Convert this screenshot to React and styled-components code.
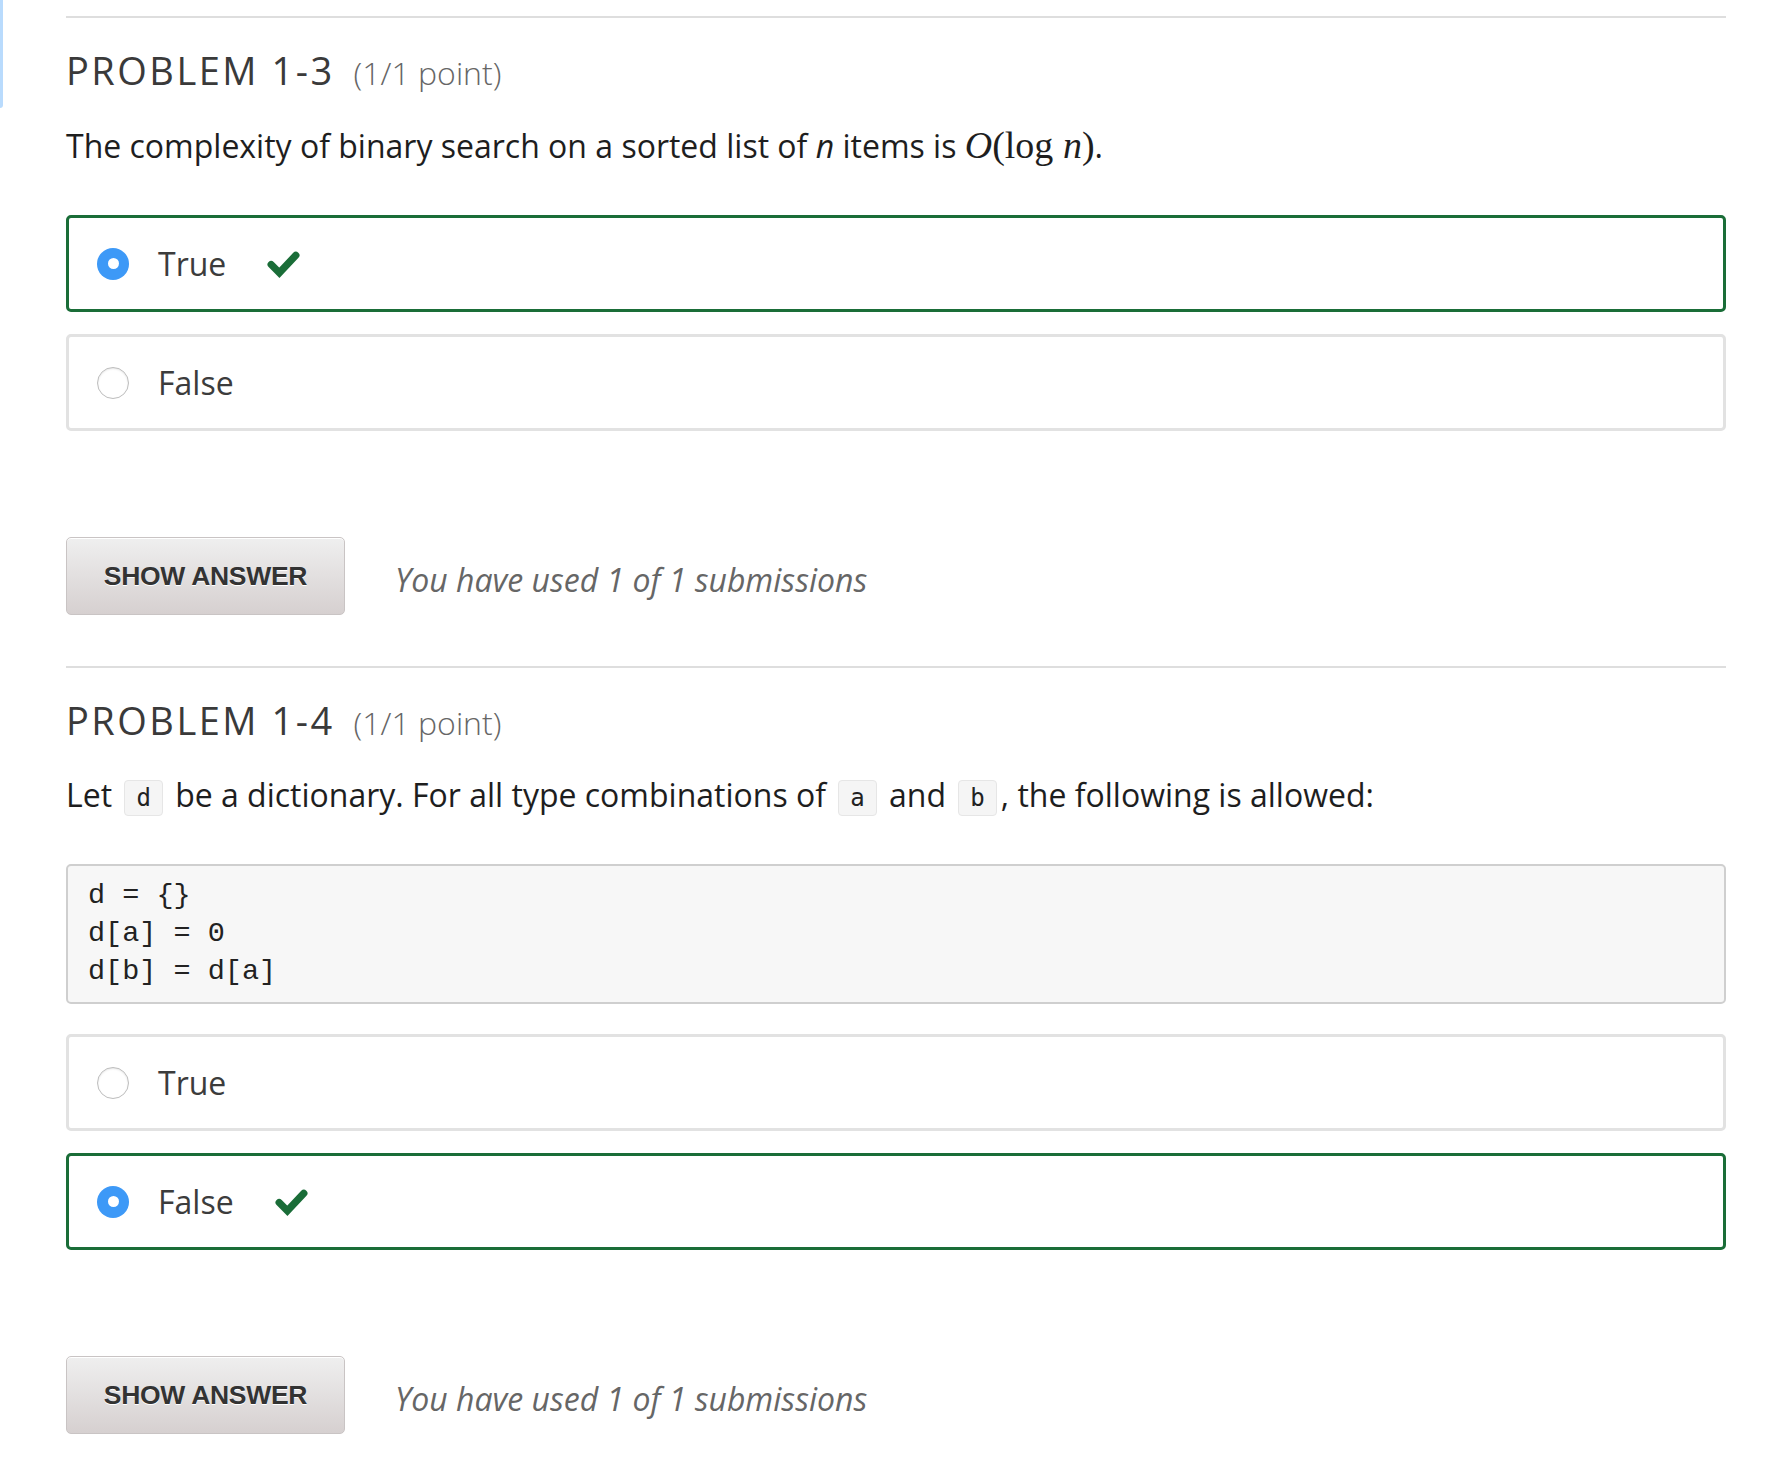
import React from "react";
import styled, { createGlobalStyle } from "styled-components";

const GlobalStyle = createGlobalStyle`
  html, body {
    margin: 0;
    padding: 0;
    background: #fff;
  }
  body {
    font-family: "Open Sans", "Noto Sans", sans-serif;
    color: #3c3c3c;
  }
`;

const Page = styled.div`
  display: flex;
  align-items: flex-start;
  width: 1792px;
  min-height: 1474px;
`;

const EdgeStrip = styled.div`
  flex: none;
  width: 3px;
  height: 108px;
  background: #b9dbfd;
  border-radius: 0 0 3px 0;
`;

const Course = styled.div`
  margin-left: 63px;
  width: 1660px;
  padding-top: 16px;
`;

const Problem = styled.section`
  border-top: 2px solid #dedede;
  padding-top: 30px;
  padding-bottom: 51px;
`;

const Heading = styled.h3`
  margin: 0;
  display: flex;
  align-items: baseline;
  gap: 19px;
  font-size: 38px;
  line-height: 44px;
  font-weight: 400;
  letter-spacing: 2.5px;
  text-transform: uppercase;
  color: #3a3a3a;
`;

const Points = styled.span`
  font-size: 32px;
  font-weight: 300;
  letter-spacing: 0;
  text-transform: none;
  color: #666;
`;

const Question = styled.p`
  margin: 27px 0 46px;
  font-size: 32px;
  line-height: 46px;
  color: #1e1e1e;
`;

const Var = styled.i`
  font-style: italic;
`;

const Math = styled.span`
  font-family: "Liberation Serif", "DejaVu Serif", serif;
  font-size: 38px;

  i {
    font-style: italic;
  }
`;

const InlineCode = styled.code`
  display: inline-block;
  font-family: "DejaVu Sans Mono", "Liberation Mono", monospace;
  font-size: 24px;
  line-height: 34px;
  padding: 0 11px;
  margin: 0 4px;
  background: #f5f5f5;
  border: 1px solid #e6e6e6;
  border-radius: 4px;
  color: #222;
  vertical-align: 1px;
`;

const CodeBlock = styled.pre`
  margin: 0 0 30px;
  padding: 11px 20px;
  background: #f7f7f7;
  border: 2px solid #cfcfcf;
  border-radius: 5px;
  font-family: "Liberation Mono", "Courier New", monospace;
  font-size: 28.5px;
  line-height: 38px;
  color: #222;
`;

const Options = styled.div`
  display: flex;
  flex-direction: column;
  gap: 22px;
`;

const Option = styled.label`
  box-sizing: border-box;
  display: flex;
  align-items: center;
  height: 97px;
  padding-left: 28px;
  border: 3px solid ${(p) => (p.$correct ? "#1a6d38" : "#e2e2e2")};
  border-radius: 5px;
  background: #fff;
`;

const Radio = styled.span`
  box-sizing: border-box;
  flex: none;
  width: 32px;
  height: 32px;
  border-radius: 50%;
  display: flex;
  align-items: center;
  justify-content: center;
  background: ${(p) => (p.$checked ? "#3d99f7" : "#fff")};
  border: ${(p) => (p.$checked ? "none" : "1px solid #bdbdbd")};
  box-shadow: ${(p) => (p.$checked ? "none" : "inset 0 1px 2px rgba(0,0,0,0.1)")};

  &::after {
    content: "";
    display: ${(p) => (p.$checked ? "block" : "none")};
    width: 11px;
    height: 11px;
    border-radius: 50%;
    background: #fff;
  }
`;

const OptionText = styled.span`
  margin-left: 29px;
  font-size: 32px;
  color: #3c3c3c;
`;

const CheckMark = styled.svg`
  margin-left: 40px;
  width: 35px;
  height: 29px;
  color: #1a6d38;
`;

const Check = () => (
  <CheckMark viewBox="0 0 34 28" aria-hidden="true">
    <path
      d="M5 15 L13 23 L29 6"
      fill="none"
      stroke="currentColor"
      strokeWidth="7"
      strokeLinecap="round"
      strokeLinejoin="miter"
    />
  </CheckMark>
);

const Actions = styled.div`
  display: flex;
  align-items: center;
  gap: 50px;
  margin-top: 106px;
`;

const ShowAnswer = styled.button`
  box-sizing: border-box;
  width: 279px;
  height: 78px;
  border: 1px solid #c9c4c4;
  border-radius: 5px;
  background: linear-gradient(to bottom, #efefef, #d6d0d0);
  box-shadow: inset 0 1px 0 #fff;
  font-family: "Liberation Sans", Arial, sans-serif;
  font-weight: 700;
  font-size: 26.5px;
  color: #333;
  text-shadow: 0 1px 0 #fff;
  letter-spacing: -0.3px;
  cursor: pointer;
`;

const Submissions = styled.span`
  font-size: 32px;
  font-style: italic;
  color: #666;
  margin-top: 6px;
`;

const problems = [
  {
    id: "1-3",
    question: (
      <>
        The complexity of binary search on a sorted list of <Var>n</Var> items is{" "}
        <Math>
          <i>O</i>(log <i>n</i>)
        </Math>
        .
      </>
    ),
    options: [
      { label: "True", checked: true },
      { label: "False", checked: false },
    ],
  },
  {
    id: "1-4",
    question: (
      <>
        Let <InlineCode>d</InlineCode> be a dictionary. For all type combinations of{" "}
        <InlineCode>a</InlineCode> and <InlineCode>b</InlineCode>, the following is allowed:
      </>
    ),
    code: "d = {}\nd[a] = 0\nd[b] = d[a]",
    options: [
      { label: "True", checked: false },
      { label: "False", checked: true },
    ],
  },
];

const App = () => (
  <>
    <GlobalStyle />
    <Page>
      <EdgeStrip />
      <Course>
        {problems.map((pr) => (
          <Problem key={pr.id}>
            <Heading>
              Problem {pr.id}
              <Points>(1/1 point)</Points>
            </Heading>
            <Question>{pr.question}</Question>
            {pr.code && <CodeBlock>{pr.code}</CodeBlock>}
            <Options>
              {pr.options.map((o) => (
                <Option key={o.label} $correct={o.checked}>
                  <Radio $checked={o.checked} />
                  <OptionText>{o.label}</OptionText>
                  {o.checked && <Check />}
                </Option>
              ))}
            </Options>
            <Actions>
              <ShowAnswer>SHOW ANSWER</ShowAnswer>
              <Submissions>You have used 1 of 1 submissions</Submissions>
            </Actions>
          </Problem>
        ))}
      </Course>
    </Page>
  </>
);

export default App;
